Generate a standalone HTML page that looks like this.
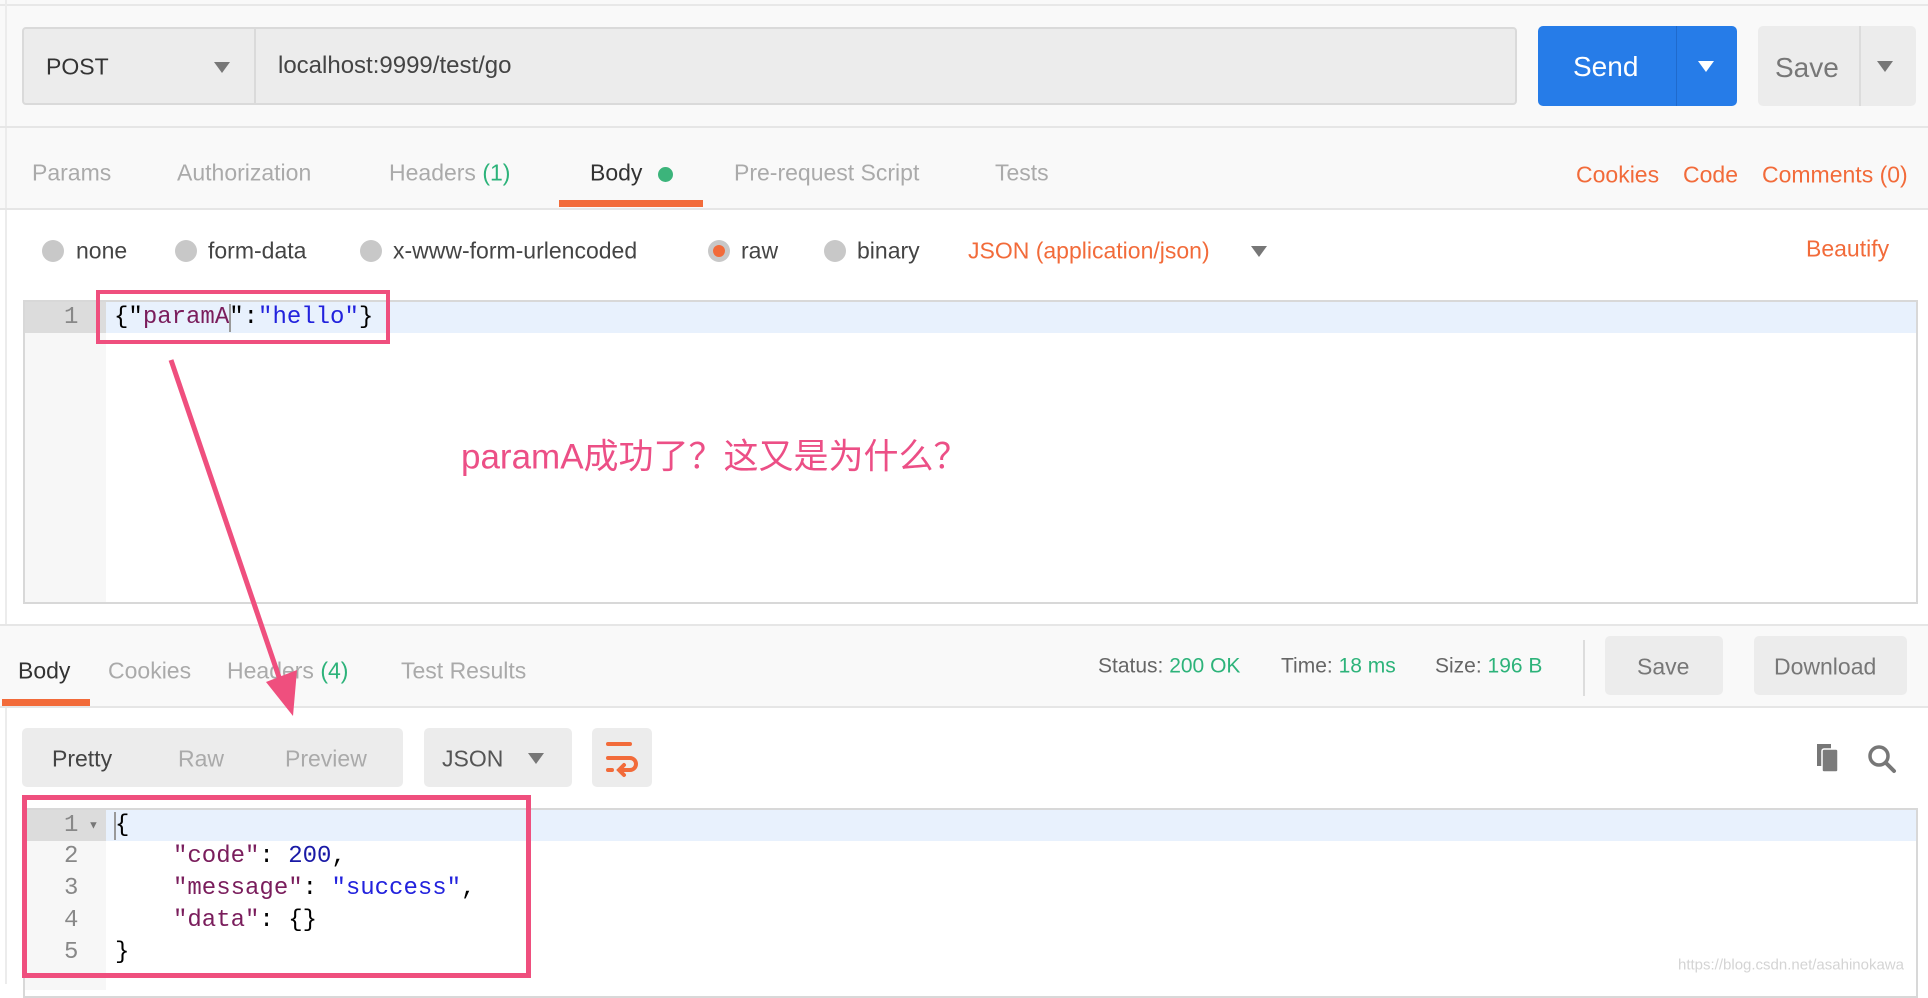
<!DOCTYPE html>
<html><head><meta charset="utf-8"><style>
*{margin:0;padding:0;box-sizing:border-box}
body{width:1928px;height:984px;position:relative;overflow:hidden;background:#fff;font-family:"Liberation Sans","Noto Sans CJK SC",sans-serif;color:#505050}
.a{position:absolute;white-space:pre}
.t{font-size:23px;line-height:1;transform:translateY(-50%)}
.g{color:#aaa}
.o{color:#f26b3a}
.gr{color:#2db37a}
.mono{font-family:"Liberation Mono","DejaVu Sans Mono",monospace;font-size:24px}
.rad{position:absolute;width:22px;height:22px;border-radius:50%;background:#c8c8c8;transform:translate(-50%,-50%)}
.k{color:#7a1d5c}.s{color:#2222dd}.n{color:#1a1aa6}
.tri{position:absolute;width:0;height:0;border-left:8px solid transparent;border-right:8px solid transparent;border-top:11px solid #777}
</style></head><body>
<div class="a" style="left:0;top:0;width:1928px;height:210px;background:#f9f9f9"></div>
<div class="a" style="left:0;top:4px;width:1928px;height:2px;background:#e8e8e8"></div>
<div class="a" style="left:5px;top:0;width:2px;height:984px;background:#ececec"></div>
<!-- URL bar -->
<div class="a" style="left:22px;top:27px;width:1495px;height:78px;background:#ececec;border:2px solid #dadada;border-radius:4px"></div>
<div class="a" style="left:254px;top:27px;width:2px;height:78px;background:#dadada"></div>
<div class="a t" style="left:46px;top:67px;color:#333;font-size:23px">POST</div>
<div class="tri" style="left:214px;top:62px"></div>
<div class="a t" style="left:278px;top:66px;color:#444;font-size:24px">localhost:9999/test/go</div>
<div class="a" style="left:1538px;top:26px;width:199px;height:80px;background:#267ce8;border-radius:5px"></div>
<div class="a" style="left:1676px;top:26px;width:1px;height:80px;background:#1f6acc"></div>
<div class="a t" style="left:1573px;top:67px;color:#fff;font-size:28px">Send</div>
<div class="tri" style="left:1698px;top:61px;border-top-color:#fff"></div>
<div class="a" style="left:1758px;top:26px;width:158px;height:80px;background:#ececec;border-radius:5px"></div>
<div class="a" style="left:1859px;top:26px;width:2px;height:80px;background:#dcdcdc"></div>
<div class="a t" style="left:1775px;top:68px;color:#777;font-size:28px">Save</div>
<div class="tri" style="left:1877px;top:61px"></div>
<div class="a" style="left:0;top:126px;width:1928px;height:2px;background:#e6e6e6"></div>
<!-- tabs -->
<div class="a t g" style="left:32px;top:173px">Params</div>
<div class="a t g" style="left:177px;top:173px">Authorization</div>
<div class="a t g" style="left:389px;top:173px">Headers <span class="gr">(1)</span></div>
<div class="a t" style="left:590px;top:173px;color:#333">Body</div>
<div class="a" style="left:658px;top:167px;width:15px;height:15px;border-radius:50%;background:#3cb47b"></div>
<div class="a t g" style="left:734px;top:173px">Pre-request Script</div>
<div class="a t g" style="left:995px;top:173px">Tests</div>
<div class="a" style="left:559px;top:200px;width:144px;height:7px;background:#f26b3a"></div>
<div class="a t o" style="left:1576px;top:175px">Cookies</div>
<div class="a t o" style="left:1683px;top:175px">Code</div>
<div class="a t o" style="left:1762px;top:175px">Comments (0)</div>
<div class="a" style="left:0;top:208px;width:1928px;height:2px;background:#e6e6e6"></div>
<!-- radio row -->
<div class="rad" style="left:53px;top:251px"></div><div class="a t" style="left:76px;top:251px;color:#444">none</div>
<div class="rad" style="left:186px;top:251px"></div><div class="a t" style="left:208px;top:251px;color:#444">form-data</div>
<div class="rad" style="left:371px;top:251px"></div><div class="a t" style="left:393px;top:251px;color:#444">x-www-form-urlencoded</div>
<div class="rad" style="left:719px;top:251px"><div style="position:absolute;left:5px;top:5px;width:12px;height:12px;border-radius:50%;background:#f26b3a"></div></div><div class="a t" style="left:741px;top:251px;color:#444">raw</div>
<div class="rad" style="left:835px;top:251px"></div><div class="a t" style="left:857px;top:251px;color:#444">binary</div>
<div class="a t o" style="left:968px;top:251px">JSON (application/json)</div>
<div class="tri" style="left:1251px;top:246px"></div>
<div class="a t o" style="left:1806px;top:249px">Beautify</div>
<!-- editor -->
<div class="a" style="left:23px;top:300px;width:1895px;height:304px;border:2px solid #d8d8d8;background:#fff"></div>
<div class="a" style="left:25px;top:302px;width:81px;height:300px;background:#f7f7f7"></div>
<div class="a" style="left:25px;top:302px;width:1891px;height:31px;background:#e8f1fd"></div>
<div class="a" style="left:25px;top:302px;width:81px;height:31px;background:#dcdcdc"></div>
<div class="a mono t" style="left:64px;top:318px;color:#888">1</div>
<div class="a mono t" style="left:114px;top:318px;color:#000">{"<span class="k">paramA</span>":<span class="s">"hello"</span>}</div>
<div class="a" style="left:229px;top:304px;width:2px;height:28px;background:#999"></div>
<div class="a" style="left:96px;top:290px;width:294px;height:54px;border:4px solid #ef4f7e"></div>
<div class="a" style="left:461px;top:454px;transform:translateY(-50%);font-size:35px;color:#ec4f86">paramA成功了？这又是为什么？</div>
<!-- response bar -->
<div class="a" style="left:0;top:624px;width:1928px;height:84px;background:#f9f9f9;border-top:2px solid #e6e6e6;border-bottom:2px solid #e6e6e6"></div>
<div class="a t" style="left:18px;top:671px;color:#333">Body</div>
<div class="a t g" style="left:108px;top:671px">Cookies</div>
<div class="a t g" style="left:227px;top:671px">Headers <span class="gr">(4)</span></div>
<div class="a t g" style="left:401px;top:671px">Test Results</div>
<div class="a" style="left:2px;top:699px;width:88px;height:7px;background:#f26b3a"></div>
<div class="a t" style="left:1098px;top:666px;font-size:21px;color:#666">Status: <span class="gr">200 OK</span></div>
<div class="a t" style="left:1281px;top:666px;font-size:21px;color:#666">Time: <span class="gr">18 ms</span></div>
<div class="a t" style="left:1435px;top:666px;font-size:21px;color:#666">Size: <span class="gr">196 B</span></div>
<div class="a" style="left:1583px;top:640px;width:2px;height:56px;background:#ddd"></div>
<div class="a" style="left:1605px;top:636px;width:118px;height:59px;background:#ececec;border-radius:5px"></div>
<div class="a t" style="left:1637px;top:667px;color:#777">Save</div>
<div class="a" style="left:1754px;top:636px;width:153px;height:59px;background:#ececec;border-radius:5px"></div>
<div class="a t" style="left:1774px;top:667px;color:#777">Download</div>
<!-- format row -->
<div class="a" style="left:22px;top:728px;width:381px;height:59px;background:#ececec;border-radius:5px"></div>
<div class="a t" style="left:52px;top:759px;color:#444">Pretty</div>
<div class="a t g" style="left:178px;top:759px">Raw</div>
<div class="a t g" style="left:285px;top:759px">Preview</div>
<div class="a" style="left:424px;top:728px;width:148px;height:59px;background:#ececec;border-radius:5px"></div>
<div class="a t" style="left:442px;top:759px;color:#555">JSON</div>
<div class="tri" style="left:528px;top:753px"></div>
<div class="a" style="left:592px;top:728px;width:60px;height:59px;background:#ececec;border-radius:5px"></div>
<svg class="a" style="left:592px;top:728px" width="60" height="59" viewBox="0 0 60 59"><g fill="none" stroke="#f26b3a" stroke-width="4" stroke-linecap="round"><path d="M16 16H38M16 30H38a6 6 0 0 1 0 12H30M16 42H20"/><path d="M32 37l-5 5 5 5"/></g></svg>
<svg class="a" style="left:1814px;top:742px" width="30" height="32" viewBox="0 0 30 32"><rect x="3" y="2" width="14" height="22" fill="#777"/><rect x="8" y="7" width="16" height="23" rx="2" fill="#7b7b7b" stroke="#fff" stroke-width="1.5"/></svg>
<svg class="a" style="left:1866px;top:743px" width="32" height="32" viewBox="0 0 32 32"><circle cx="13" cy="13" r="9" fill="none" stroke="#777" stroke-width="3.5"/><path d="M20 20l8 8" stroke="#777" stroke-width="4" stroke-linecap="round"/></svg>
<!-- response editor -->
<div class="a" style="left:23px;top:808px;width:1895px;height:190px;border:2px solid #d8d8d8;background:#fff"></div>
<div class="a" style="left:25px;top:810px;width:81px;height:180px;background:#f7f7f7"></div>
<div class="a" style="left:25px;top:810px;width:1891px;height:31px;background:#e8f1fd"></div>
<div class="a" style="left:25px;top:810px;width:81px;height:31px;background:#dcdcdc"></div>
<div class="a mono t" style="left:64px;top:826px;color:#888">1</div>
<div class="a t" style="left:88px;top:826px;font-size:11px;color:#777">▼</div>
<div class="a mono t" style="left:64px;top:857px;color:#888">2</div>
<div class="a mono t" style="left:64px;top:889px;color:#888">3</div>
<div class="a mono t" style="left:64px;top:921px;color:#888">4</div>
<div class="a mono t" style="left:64px;top:953px;color:#888">5</div>
<div class="a" style="left:114px;top:812px;width:2px;height:28px;background:#999"></div>
<div class="a mono t" style="left:115px;top:826px;color:#000">{</div>
<div class="a mono t" style="left:173px;top:857px;color:#000"><span class="k">"code"</span>: <span class="n">200</span>,</div>
<div class="a mono t" style="left:173px;top:889px;color:#000"><span class="k">"message"</span>: <span class="s">"success"</span>,</div>
<div class="a mono t" style="left:173px;top:921px;color:#000"><span class="k">"data"</span>: {}</div>
<div class="a mono t" style="left:115px;top:953px;color:#000">}</div>
<div class="a" style="left:22px;top:795px;width:509px;height:183px;border:5px solid #ef4f7e"></div>
<div class="a" style="left:1678px;top:965px;transform:translateY(-50%);font-size:15px;color:#d4d4d4">https://blog.csdn.net/asahinokawa</div>
<!-- arrow -->
<svg class="a" style="left:0;top:0" width="1928" height="984"><path d="M171 360L280 680" stroke="#ef4f7e" stroke-width="5"/><path d="M293 716L266 682L297 670Z" fill="#ef4f7e"/></svg>
</body></html>
